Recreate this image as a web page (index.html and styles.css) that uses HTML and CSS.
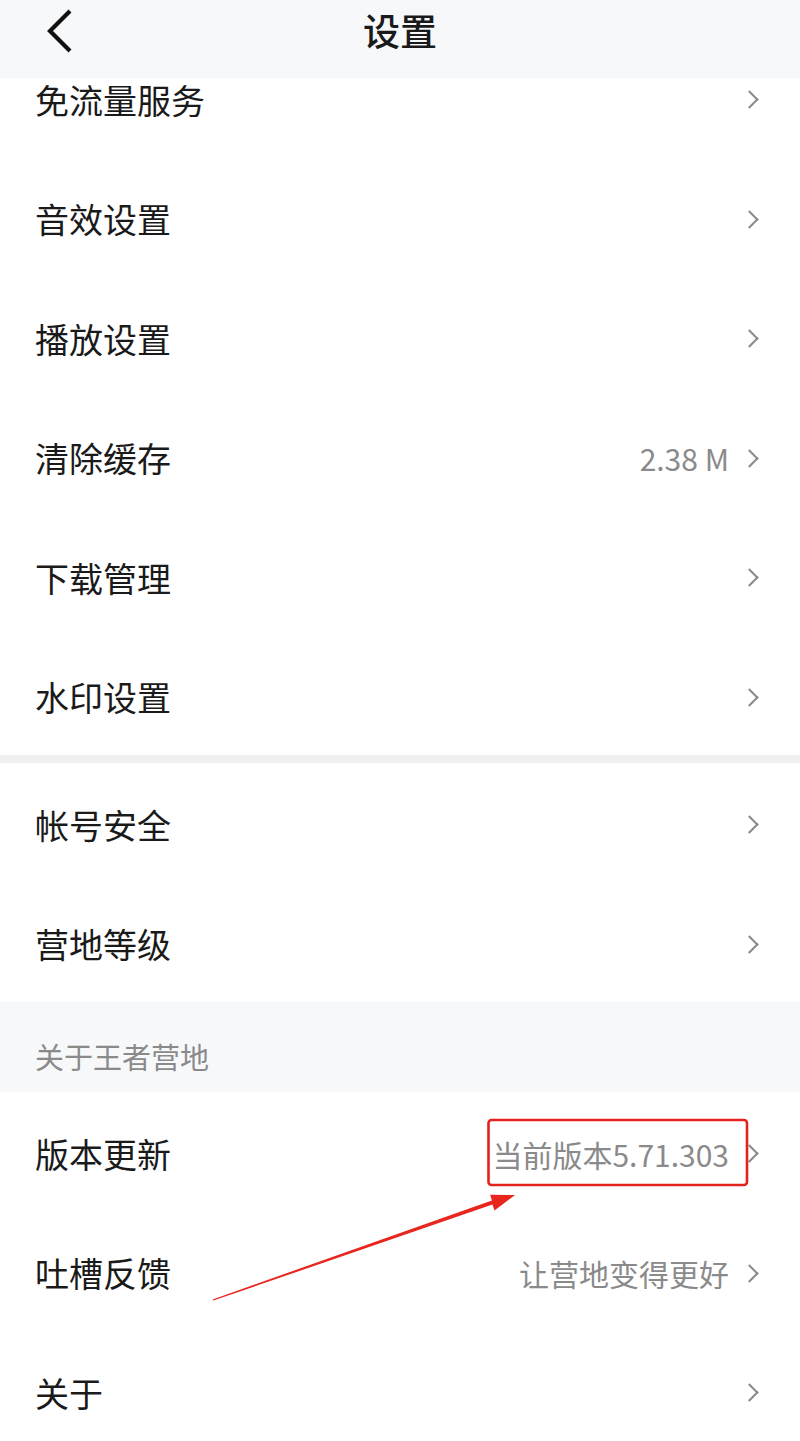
FILE: index.html
```html
<!DOCTYPE html>
<html>
<head>
<meta charset="utf-8">
<title>设置</title>
<link rel="stylesheet" href="styles.css">
</head>
<body>

<!-- top bar sits over the scrolled list -->
<header class="topbar">
  <svg class="backIcon" width="30" height="46" viewBox="0 0 30 46">
    <path d="M25 3 L5 23 L25 43" fill="none" stroke="#111" stroke-width="4.2" stroke-linejoin="miter"/>
  </svg>
  <h1 class="title">设置</h1>
</header>

<main class="settings">
  <div class="group">
    <div class="row"><span class="label">免流量服务</span><span class="chevron"></span></div>
    <div class="row"><span class="label">音效设置</span><span class="chevron"></span></div>
    <div class="row"><span class="label">播放设置</span><span class="chevron"></span></div>
    <div class="row"><span class="label">清除缓存</span><span class="value">2.38 M</span><span class="chevron"></span></div>
    <div class="row"><span class="label">下载管理</span><span class="chevron"></span></div>
    <div class="row"><span class="label">水印设置</span><span class="chevron"></span></div>
  </div>

  <div class="divider"></div>

  <div class="group">
    <div class="row"><span class="label">帐号安全</span><span class="chevron"></span></div>
    <div class="row"><span class="label">营地等级</span><span class="chevron"></span></div>
  </div>

  <div class="sectionTitle">关于王者营地</div>

  <div class="group">
    <div class="row"><span class="label">版本更新</span><span class="value">当前版本5.71.303</span><span class="chevron"></span></div>
    <div class="row"><span class="label">吐槽反馈</span><span class="value">让营地变得更好</span><span class="chevron"></span></div>
    <div class="row"><span class="label">关于</span><span class="chevron"></span></div>
  </div>
</main>

<!-- red annotation drawn over the screenshot -->
<svg class="annotation" width="800" height="1441" viewBox="0 0 800 1441">
  <rect x="488.5" y="1120" width="258.5" height="65" rx="3" fill="none" stroke="#e3211f" stroke-width="2.6"/>
  <polygon fill="#e8261f" points="213.3,1300.6 492.5,1204.6 494.5,1210.4 515,1195 490.2,1194.8 491.9,1200.4 212.7,1299.4"/>
</svg>

</body>
</html>
```

FILE: styles.css
```css
:root {
  --text-color: #1a1a1a;
  --sub-color: #8a8a8a;
  --bar-bg: #f7f8fa;
  --divider-bg: #f0f0f0;
}

body {
  margin: 0;
  padding-top: 38px; /* list is scrolled a bit under the top bar */
  background-color: #ffffff;
  color: var(--text-color);
  font-family: "Noto Sans CJK SC", "Noto Sans", sans-serif;
  overflow: hidden;
}

.topbar {
  position: fixed;
  top: 0;
  left: 0;
  right: 0;
  height: 78px;
  background-color: var(--bar-bg);
  display: flex;
  align-items: center;
  justify-content: center;
  z-index: 10;
}

.backIcon {
  position: absolute;
  left: 45px;
  top: 8px;
}

.title {
  margin: 0 0 17px 0;
  font-size: 37px;
  font-weight: 500;
  line-height: 1;
}

.row {
  height: 119.5px;
  display: flex;
  align-items: center;
  padding: 4px 40px 0 35px;
  box-sizing: border-box;
}

.label {
  flex-grow: 1;
  font-size: 34px;
  line-height: 1;
}

.value {
  font-size: 30px;
  line-height: 1;
  color: var(--sub-color);
  margin-right: 14px;
}

.chevron {
  width: 11px;
  height: 11px;
  border-top: 2.4px solid var(--sub-color);
  border-right: 2.4px solid var(--sub-color);
  transform: rotate(45deg);
  margin-right: 4px;
}

.divider {
  height: 8px;
  background-color: var(--divider-bg);
}

.sectionTitle {
  height: 90px;
  box-sizing: border-box;
  padding: 40px 0 0 35px;
  background-color: var(--bar-bg);
  font-size: 29px;
  line-height: 1;
  color: var(--sub-color);
}

.annotation {
  position: absolute;
  top: 0;
  left: 0;
  pointer-events: none;
}
```
